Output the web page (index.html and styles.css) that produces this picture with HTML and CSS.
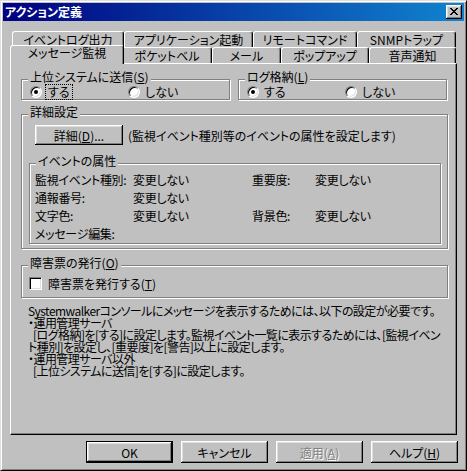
FILE: index.html
```html
<!DOCTYPE html>
<html lang="ja">
<head>
    <meta charset="UTF-8">
    <title>アクション定義</title>
    <link rel="stylesheet" href="styles.css">
</head>
<body>
    <div class="window">
        <div class="titlebar">
            <span class="title">アクション定義</span>
            <button class="close-btn">
                <svg width="8" height="7" viewBox="0 0 8 7" shape-rendering="crispEdges">
                    <path d="M0 0h2v1H0zM6 0h2v1H6zM1 1h2v1H1zM5 1h2v1H5zM2 2h4v1H2zM3 3h2v1H3zM2 4h4v1H2zM1 5h2v1H1zM5 5h2v1H5zM0 6h2v1H0zM6 6h2v1H6z" fill="#000"/>
                </svg>
            </button>
        </div>

        <div class="tabs">
            <div class="tab-row">
                <div class="tab tab-log">イベントログ出力</div>
                <div class="tab tab-app">アプリケーション起動</div>
                <div class="tab tab-remote">リモートコマンド</div>
                <div class="tab tab-snmp">SNMPトラップ</div>
            </div>
            <div class="tab-row">
                <div class="tab tab-msg selected">メッセージ監視</div>
                <div class="tab tab-pager">ポケットベル</div>
                <div class="tab tab-mail">メール</div>
                <div class="tab tab-popup">ポップアップ</div>
                <div class="tab tab-voice">音声通知</div>
            </div>
        </div>

        <div class="panel">
            <div class="group-row">
                <div class="group send">
                    <span class="group-title">上位システムに送信(<u>S</u>)</span>
                    <div class="option">
                        <span class="radio"><span class="dot"></span></span>
                        <span class="focus">する</span>
                    </div>
                    <div class="option">
                        <span class="radio"></span>
                        <span>しない</span>
                    </div>
                </div>
                <div class="group send">
                    <span class="group-title">ログ格納(<u>L</u>)</span>
                    <div class="option">
                        <span class="radio"><span class="dot"></span></span>
                        <span>する</span>
                    </div>
                    <div class="option">
                        <span class="radio"></span>
                        <span>しない</span>
                    </div>
                </div>
            </div>

            <div class="group detail">
                <span class="group-title">詳細設定</span>
                <div class="detail-line">
                    <button class="btn detail-btn">詳細(<u>D</u>)...</button>
                    <span>(監視イベント種別等のイベントの属性を設定します)</span>
                </div>
                <div class="group attrs">
                    <span class="group-title">イベントの属性</span>
                    <div class="attr-grid">
                        <span>監視イベント種別:</span>
                        <span>変更しない</span>
                        <span>重要度:</span>
                        <span>変更しない</span>
                        <span>通報番号:</span>
                        <span>変更しない</span>
                        <span></span>
                        <span></span>
                        <span>文字色:</span>
                        <span>変更しない</span>
                        <span>背景色:</span>
                        <span>変更しない</span>
                        <span>メッセージ編集:</span>
                    </div>
                </div>
            </div>

            <div class="group ticket">
                <span class="group-title">障害票の発行(<u>O</u>)</span>
                <div class="check-line">
                    <span class="checkbox"></span>
                    <span>障害票を発行する(<u>T</u>)</span>
                </div>
            </div>

            <div class="note">
                <div>Systemwalkerコンソールにメッセージを表示するためには、以下の設定が必要です。</div>
                <div>・運用管理サーバ</div>
                <div class="indent">[ログ格納]を[する]に設定します。監視イベント一覧に表示するためには、[監視イベン</div>
                <div>ト種別]を設定し、[重要度]を[警告]以上に設定します。</div>
                <div>・運用管理サーバ以外</div>
                <div class="indent">[上位システムに送信]を[する]に設定します。</div>
            </div>
        </div>

        <div class="buttons">
            <button class="btn dialog-btn default">OK</button>
            <button class="btn dialog-btn">キャンセル</button>
            <button class="btn dialog-btn disabled">適用(<u>A</u>)</button>
            <button class="btn dialog-btn">ヘルプ(<u>H</u>)</button>
        </div>
    </div>
</body>
</html>
```

FILE: styles.css
```css
* {
    box-sizing: border-box;
}

body {
    margin: 0;
    background-color: #c0c0c0;
    font-family: "Noto Sans CJK JP", "Liberation Sans", sans-serif;
    font-size: 12px;
    font-feature-settings: "palt";
    color: #000;
}

u {
    text-decoration: underline;
    text-underline-offset: 1px;
}

.window {
    width: 467px;
    height: 471px;
    padding: 2px;
    background-color: #c0c0c0;
    border: 1px solid;
    border-color: #dfdfdf #000 #000 #dfdfdf;
    box-shadow: inset 1px 1px #fff, inset -1px -1px #808080;
}

/* title bar */
.titlebar {
    height: 18px;
    display: flex;
    align-items: center;
    justify-content: space-between;
    padding: 0 2px;
    background: linear-gradient(to right, #000080, #1084d0);
    color: #fff;
    font-weight: bold;
    line-height: 18px;
}

.close-btn {
    width: 16px;
    height: 14px;
    padding: 0 1px 1px 0;
    border: none;
    background-color: #c0c0c0;
    display: flex;
    align-items: center;
    justify-content: center;
    box-shadow: inset -1px -1px #000, inset 1px 1px #fff, inset -2px -2px #808080, inset 2px 2px #dfdfdf;
}

/* tabs */
.tabs {
    margin: 10px 0 0 9px;
}

.tab-row {
    display: flex;
    height: 16px;
}

.tab {
    height: 16px;
    border: 1px solid;
    border-bottom: none;
    border-color: #fff #000 transparent #fff;
    border-radius: 3px 3px 0 0;
    box-shadow: inset -1px 0 #808080;
    text-align: center;
    line-height: 15px;
    white-space: nowrap;
}

.tab-log { width: 112px; }
.tab-app { width: 129px; }
.tab-remote { width: 104px; }
.tab-snmp { width: 99px; }
.tab-msg { width: 110px; }
.tab-pager { width: 90px; }
.tab-mail { width: 69px; }
.tab-popup { width: 88px; }
.tab-voice { width: 87px; }

.tab.selected {
    position: relative;
    z-index: 1;
    width: 114px;
    height: 19px;
    margin: -2px -2px 0 -2px;
    background-color: #c0c0c0;
    line-height: 14px;
}

/* main panel */
.panel {
    width: 447px;
    height: 372px;
    margin-left: 7px;
    padding: 15px 8px 0 10px;
    border: 1px solid;
    border-color: #fff #000 #000 #fff;
    box-shadow: inset -1px -1px #808080;
}

.group {
    position: relative;
    border: 1px solid #808080;
    box-shadow: inset 1px 1px #fff, 1px 1px #fff;
}

.group-title {
    position: absolute;
    top: -9px;
    left: 6px;
    padding: 0 2px;
    background-color: #c0c0c0;
    line-height: 12px;
    white-space: nowrap;
}

.group-row {
    display: flex;
    gap: 8px;
}

.group.send {
    width: 209px;
    height: 21px;
    display: flex;
    padding: 6px 0 0 8px;
}

.option {
    width: 98px;
    height: 12px;
    display: flex;
    align-items: center;
    gap: 5px;
    line-height: 12px;
}

.radio {
    width: 12px;
    height: 12px;
    border-radius: 50%;
    border: 1px solid;
    border-color: #808080 #fff #fff #808080;
    background-color: #fff;
    box-shadow: inset 1px 1px #000, inset -1px -1px #dfdfdf;
    display: flex;
    align-items: center;
    justify-content: center;
}

.dot {
    width: 4px;
    height: 4px;
    border-radius: 50%;
    background-color: #000;
}

.focus {
    outline: 1px dotted #000;
    outline-offset: 1px;
    padding: 0 1px;
}

.group.detail {
    height: 135px;
    margin-top: 14px;
    padding: 10px 6px 0 7px;
}

.detail-line {
    display: flex;
    align-items: center;
    gap: 5px;
    margin-left: 6px;
    white-space: nowrap;
}

.btn {
    border: none;
    background-color: #c0c0c0;
    font: inherit;
    color: #000;
    padding: 0;
    box-shadow: inset -1px -1px #000, inset 1px 1px #fff, inset -2px -2px #808080, inset 2px 2px #dfdfdf;
}

.detail-btn {
    width: 88px;
    height: 20px;
}

.group.attrs {
    height: 81px;
    margin-top: 18px;
    padding: 7px 0 0 5px;
}

.attr-grid {
    display: grid;
    grid-template-columns: 98px 119px 63px 1fr;
    grid-auto-rows: 18px;
    line-height: 18px;
    letter-spacing: -0.3px;
    white-space: nowrap;
}

.group.ticket {
    height: 33px;
    margin-top: 16px;
    padding: 11px 0 0 7px;
}

.check-line {
    display: flex;
    align-items: center;
    gap: 6px;
    line-height: 13px;
}

.checkbox {
    width: 13px;
    height: 13px;
    border: 1px solid;
    border-color: #808080 #fff #fff #808080;
    background-color: #fff;
    box-shadow: inset 1px 1px #000, inset -1px -1px #dfdfdf;
}

.note {
    margin: 7px 0 0 7px;
    line-height: 12px;
    letter-spacing: -0.55px;
    white-space: nowrap;
}

.note .indent {
    padding-left: 5px;
}

/* bottom buttons */
.buttons {
    display: flex;
    justify-content: flex-end;
    gap: 8px;
    margin-top: 6px;
    padding-right: 6px;
}

.dialog-btn {
    width: 87px;
    height: 22px;
}

.dialog-btn.default {
    border: 1px solid #000;
}

.dialog-btn.disabled {
    color: #808080;
    text-shadow: 1px 1px #fff;
}
```
